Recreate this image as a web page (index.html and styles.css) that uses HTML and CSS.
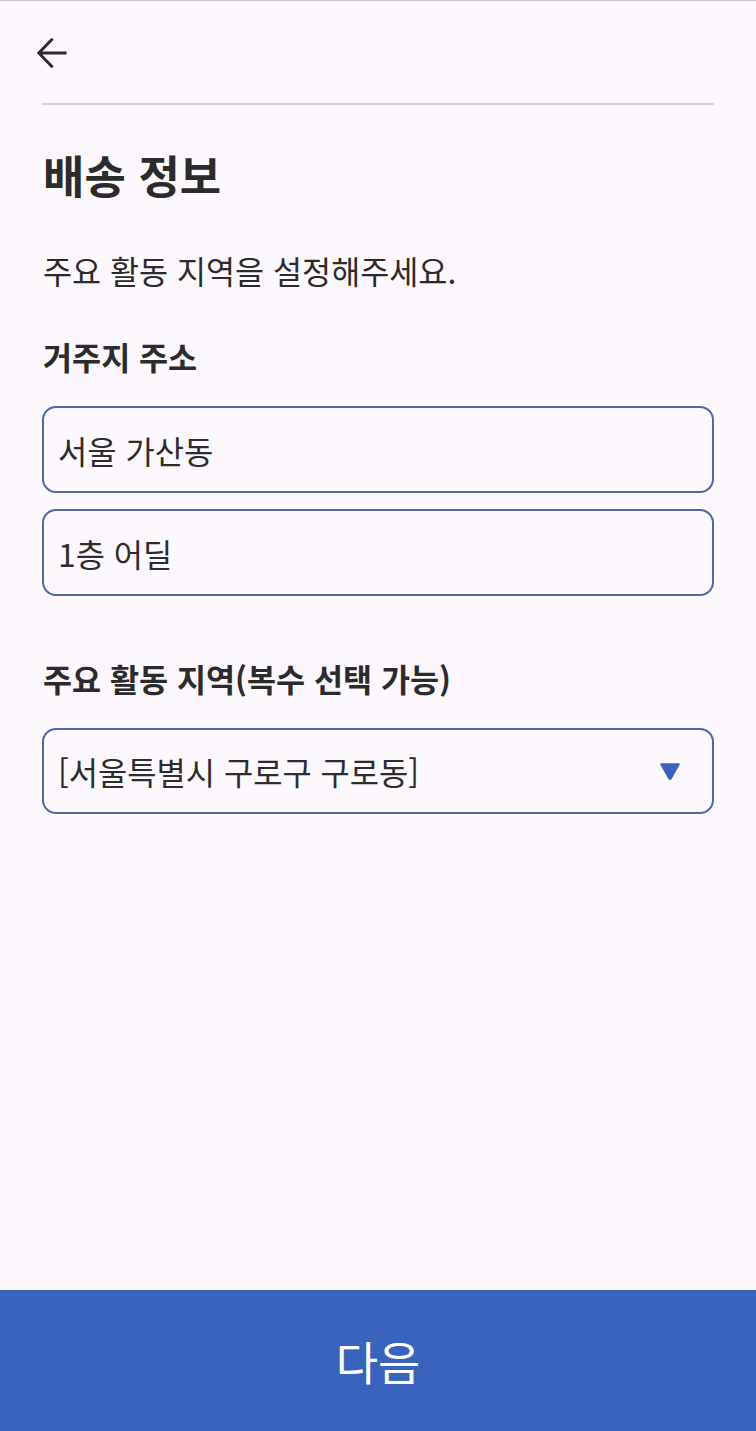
FILE: index.html
```html
<!DOCTYPE html>
<html lang="ko">
<head>
  <meta charset="utf-8">
  <title>배송 정보</title>
  <meta name="viewport" content="width=device-width, initial-scale=1.0">
  <link rel="stylesheet" href="styles.css">
</head>
<body>
  <div class="screen">
    <!-- Top bar -->
    <div class="topbar">
      <button class="back" aria-label="뒤로">
        <svg width="30" height="30" viewBox="0 0 30 30">
          <path d="M29.5 15H1.8M15.6 0.8L1.8 15L15.6 29.2" fill="none" stroke="#2b2b2b" stroke-width="3"/>
        </svg>
      </button>
    </div>
    <div class="divider"></div>

    <!-- Form -->
    <div class="content">
      <h1>배송 정보</h1>
      <p class="desc">주요 활동 지역을 설정해주세요.</p>

      <h2 class="label">거주지 주소</h2>
      <div class="field">서울 가산동</div>
      <div class="field field-next">1층 어딜</div>

      <h2 class="label label-area">주요 활동 지역(복수 선택 가능)</h2>
      <div class="field select">
        <span>[서울특별시 구로구 구로동]</span>
        <svg class="caret" width="22" height="19" viewBox="0 0 22 19">
          <path d="M2.6 1.2H19.4Q21.4 1.2 20.5 3.1L12.6 17.1Q11 19.2 9.4 17.1L1.5 3.1Q0.6 1.2 2.6 1.2Z" fill="#3a63c0"/>
        </svg>
      </div>
    </div>

    <button class="next">다음</button>
  </div>
</body>
</html>
```

FILE: styles.css
```css
body {
  margin: 0;
  background-color: #fcf8fd;
  font-family: "Noto Sans CJK KR", "Noto Sans", sans-serif;
  color: #2b2b2b;
}
.screen {
  height: 1431px;
  display: flex;
  flex-direction: column;
  border-top: 1px solid #c6c6ca;
  box-sizing: border-box;
}
.topbar {
  height: 102px;
  display: flex;
  align-items: center;
  padding-left: 37px;
}
.back {
  background: none;
  border: none;
  padding: 0;
  width: 30px;
  height: 30px;
  margin-top: 2px;
  cursor: pointer;
}
.back svg {
  display: block;
}
.divider {
  height: 2px;
  margin: 0 42px;
  background-color: #d3d0d6;
}
.content {
  flex: 1;
  padding: 0 42px;
}
h1 {
  margin: 45px 0 0 1px;
  font-size: 45px;
  line-height: 50px;
  font-weight: 700;
}
.desc {
  margin: 50px 0 0 1px;
  font-size: 31.6px;
  line-height: 40px;
}
.label {
  margin: 46px 0 0 1px;
  font-size: 31.6px;
  line-height: 40px;
  font-weight: 700;
}
.label-area {
  margin-top: 62px;
}
.field {
  margin-top: 30px;
  height: 87px;
  box-sizing: border-box;
  border: 2px solid #4a6aa8;
  border-radius: 14px;
  padding: 0 14px;
  display: flex;
  align-items: center;
  font-size: 31.8px;
  color: #2d2d2d;
}
.field-next {
  margin-top: 16px;
}
.select {
  height: 86px;
  justify-content: space-between;
  padding-right: 31px;
}
.caret {
  display: block;
}
.next {
  height: 141px;
  flex-shrink: 0;
  border: none;
  background-color: #3a63bd;
  color: #ffffff;
  font-family: "Noto Sans CJK KR", "Noto Sans", sans-serif;
  font-size: 46px;
  font-weight: 400;
  padding: 0 0 2px;
  cursor: pointer;
}
```
